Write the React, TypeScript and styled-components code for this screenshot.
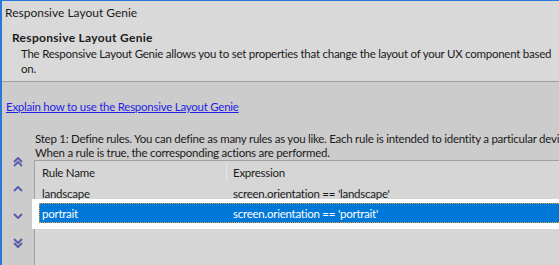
import React from "react";
import styled, { createGlobalStyle } from "styled-components";

const Global = createGlobalStyle`
  html, body { margin: 0; padding: 0; background: #cccccc; overflow: hidden; }
  body {
    font-family: "Lato", "Noto Sans", sans-serif;
    font-size: 11.5px;
    letter-spacing: -0.25px;
    color: #1b1b1b;
  }
`;

const Window = styled.div`
  width: 559px;
  height: 265px;
  box-sizing: border-box;
  border-top: 1px solid #2b79d7;
  border-left: 2px solid #2b79d7;
  display: flex;
  flex-direction: column;
  overflow: hidden;
  background: #cccccc;
`;

const TopPanel = styled.div`
  height: 80px;
  flex: none;
  background: #d9d9d9;
  border-bottom: 1px solid #a0a0a0;
  display: flex;
  flex-direction: column;
`;

const TitleText = styled.div`
  height: 24px;
  line-height: 24px;
  padding-left: 3px;
  font-size: 12px;
  letter-spacing: 0;
  white-space: nowrap;
`;

const Heading = styled.div`
  margin-top: 5px;
  padding-left: 10px;
  line-height: 16px;
  font-size: 12px;
  letter-spacing: 0.3px;
  font-weight: 700;
  white-space: nowrap;
`;

const Desc = styled.div`
  padding-left: 19px;
  line-height: 15px;
  white-space: nowrap;
`;

const Main = styled.div`
  flex: 1;
  display: flex;
  flex-direction: column;
  min-height: 0;
`;

const HelpLink = styled.a`
  margin-top: 17px;
  margin-left: 4px;
  line-height: 16px;
  color: #1f1fe6;
  text-decoration: underline;
  white-space: nowrap;
  align-self: flex-start;
  cursor: pointer;
`;

const Body = styled.div`
  margin-top: 17px;
  flex: 1;
  display: flex;
  min-height: 0;
`;

const ArrowCol = styled.div`
  width: 32px;
  flex: none;
  padding-top: 16px;
  display: flex;
  flex-direction: column;
  align-items: center;
`;

const ArrowBtn = styled.div`
  height: 27px;
  width: 32px;
  display: flex;
  align-items: center;
  justify-content: center;
  color: #5b5ea8;
`;

const RightCol = styled.div`
  flex: 1;
  display: flex;
  flex-direction: column;
  min-width: 0;
`;

const StepText = styled.div`
  padding-left: 1px;
  line-height: 14px;
  white-space: nowrap;
`;

const Table = styled.div`
  position: relative;
  z-index: 0;
  flex: 1;
  width: 700px;
  border-top: 1px solid #a0a0a0;
  border-left: 1px solid #a0a0a0;
  background: #d6d6d6;
  display: flex;
  flex-direction: column;
`;

const Row = styled.div<{ $selected?: boolean }>`
  height: 20px;
  display: flex;
  align-items: center;
  white-space: nowrap;
  box-sizing: border-box;
  color: #1b1b1b;
  ${(p) =>
    p.$selected &&
    `
    position: relative;
    margin-left: 4px;
    background: #0078d7;
    color: #ffffff;
    border: 1px dotted #e0a040;
    &::before {
      content: "";
      position: absolute;
      z-index: -1;
      top: -5px;
      bottom: -7px;
      left: -8px;
      right: -1px;
      background: #ffffff;
    }
  `}
`;

const HeaderRow = styled(Row)`
  height: 22px;
`;

const Cell = styled.div<{ $w?: number; $divider?: boolean; $pad?: number }>`
  width: ${(p) => (p.$w ? `${p.$w}px` : "auto")};
  flex: ${(p) => (p.$w ? "none" : "1")};
  padding-left: ${(p) => p.$pad ?? 6}px;
  box-sizing: border-box;
  align-self: stretch;
  display: flex;
  align-items: center;
  ${(p) => (p.$divider ? "border-right: 1px solid #e6e6e6; margin: 2px 0;" : "")}
`;

const Chevron = ({ dir, double }: { dir: "up" | "down"; double?: boolean }) => {
  const up = dir === "up";
  const one = (y: number) =>
    up ? `M1 ${y + 4} L5 ${y} L9 ${y + 4}` : `M1 ${y} L5 ${y + 4} L9 ${y}`;
  return (
    <svg width="10" height={double ? 10 : 6} viewBox={`0 0 10 ${double ? 10 : 6}`} fill="none">
      <path d={one(1)} stroke="currentColor" strokeWidth="2" />
      {double && <path d={one(5)} stroke="currentColor" strokeWidth="2" />}
    </svg>
  );
};

export default function App() {
  return (
    <>
      <Global />
      <Window>
        <TopPanel>
          <TitleText>Responsive Layout Genie</TitleText>
          <Heading>Responsive Layout Genie</Heading>
          <Desc>
            The Responsive Layout Genie allows you to set properties that change the layout of your UX component based
          </Desc>
          <Desc>on.</Desc>
        </TopPanel>
        <Main>
          <HelpLink>Explain how to use the Responsive Layout Genie</HelpLink>
          <Body>
            <ArrowCol>
              <ArrowBtn><Chevron dir="up" double /></ArrowBtn>
              <ArrowBtn><Chevron dir="up" /></ArrowBtn>
              <ArrowBtn><Chevron dir="down" /></ArrowBtn>
              <ArrowBtn><Chevron dir="down" double /></ArrowBtn>
            </ArrowCol>
            <RightCol>
              <StepText>
                Step 1: Define rules. You can define as many rules as you like. Each rule is intended to identity a particular device
              </StepText>
              <StepText>When a rule is true, the corresponding actions are performed.</StepText>
              <Table>
                <HeaderRow>
                  <Cell $w={192} $divider $pad={7}>Rule Name</Cell>
                  <Cell>Expression</Cell>
                </HeaderRow>
                <Row>
                  <Cell $w={192} $pad={7}>landscape</Cell>
                  <Cell>screen.orientation == 'landscape'</Cell>
                </Row>
                <Row $selected>
                  <Cell $w={187} $pad={2}>portrait</Cell>
                  <Cell>screen.orientation == 'portrait'</Cell>
                </Row>
              </Table>
            </RightCol>
          </Body>
        </Main>
      </Window>
    </>
  );
}
